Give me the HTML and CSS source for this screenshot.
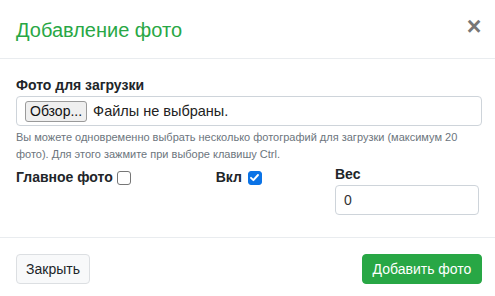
FILE: index.html
```html
<!DOCTYPE html>
<html lang="ru">

<head>
    <meta charset="UTF-8">
    <meta name="viewport" content="width=device-width, initial-scale=1.0">
    <title>Добавление фото</title>
    <link rel="stylesheet" href="styles.css">
</head>

<body>
    <div class="modal">
        <div class="modal-header">
            <h5 class="modal-title">Добавление фото</h5>
            <button class="close-btn">&times;</button>
        </div>
        <div class="modal-body">
            <label class="field-label">Фото для загрузки</label>
            <div class="file-box">
                <span class="file-btn">Обзор...</span>
                <span class="file-text">Файлы не выбраны.</span>
            </div>
            <div class="help-text">Вы можете одновременно выбрать несколько фотографий для загрузки (максимум 20 фото). Для этого зажмите при выборе клавишу Ctrl.</div>
            <div class="form-row">
                <div class="col col-main">
                    <label class="check-label">Главное фото <span class="check"></span></label>
                </div>
                <div class="col col-on">
                    <label class="check-label">Вкл <span class="check checked">
                        <svg width="11" height="11" viewBox="0 0 11 11"><path d="M2 5.8 L4.4 8.2 L9 3" fill="none" stroke="#fff" stroke-width="1.9" stroke-linecap="round" stroke-linejoin="round"/></svg>
                    </span></label>
                </div>
                <div class="col col-weight">
                    <label class="field-label">Вес</label>
                    <div class="text-input">0</div>
                </div>
            </div>
        </div>
        <div class="modal-footer">
            <button class="btn btn-light">Закрыть</button>
            <button class="btn btn-green">Добавить фото</button>
        </div>
    </div>
</body>

</html>
```

FILE: styles.css
```css
* {
    padding: 0;
    margin: 0;
    box-sizing: border-box;
}

body {
    background: #fff;
    font-family: "Liberation Sans", Arial, sans-serif;
    color: #212529;
}

.modal {
    width: 495px;
    height: 296px;
}

.modal-header {
    display: flex;
    justify-content: space-between;
    align-items: center;
    padding: 13px 11px 13px 16px;
    height: 59px;
    border-bottom: 1px solid #e9ecef;
}

.modal-title {
    font-size: 20px;
    font-weight: normal;
    color: #28a745;
    line-height: 24px;
    margin-top: 2px;
}

.close-btn {
    border: none;
    background: none;
    font-family: "Liberation Sans", Arial, sans-serif;
    font-size: 25px;
    font-weight: bold;
    color: #777;
    line-height: 24px;
    width: 20px;
    margin-top: -7px;
}

.modal-body {
    padding: 16px 16px 0 16px;
    height: 179px;
    border-bottom: 1px solid #e9ecef;
}

.field-label {
    display: block;
    font-size: 14px;
    font-weight: bold;
    line-height: 21px;
}

.file-box {
    display: flex;
    align-items: center;
    width: 466px;
    height: 30px;
    border: 1px solid #ced4da;
    border-radius: 4px;
    padding-left: 8px;
    font-size: 14px;
}

.file-btn {
    display: inline-block;
    height: 21px;
    line-height: 19px;
    padding: 0 4px;
    border: 1px solid #9a9a9a;
    border-radius: 3px;
    background: #efefef;
    color: #111;
    font-size: 14px;
}

.file-text {
    margin-left: 6px;
    color: #222;
    font-size: 14.5px;
}

.help-text {
    margin-top: 3px;
    font-size: 11px;
    line-height: 17px;
    color: #6c757d;
    padding-right: 10px;
}

.form-row {
    display: flex;
    margin-top: 1px;
}

.col-main {
    width: 201px;
}

.col-on {
    width: 120px;
}

.col-weight {
    width: 145px;
}

.check-label {
    display: flex;
    align-items: center;
    gap: 4px;
    font-size: 14px;
    font-weight: bold;
    line-height: 21px;
    margin-top: 3px;
}

.col-on .check-label {
    gap: 6px;
}

.check {
    display: inline-flex;
    align-items: center;
    justify-content: center;
    width: 14px;
    height: 14px;
    border: 1px solid #767676;
    border-radius: 3px;
    background: #fff;
}

.check.checked {
    border-color: #0b73e6;
    background: #0b73e6;
}

.text-input {
    margin-top: 0;
    height: 30px;
    border: 1px solid #ced4da;
    border-radius: 4px;
    padding-left: 8px;
    font-size: 14px;
    line-height: 28px;
    color: #333;
}

.modal-footer {
    display: flex;
    justify-content: space-between;
    padding: 16px 13px 0 16px;
}

.btn {
    height: 30px;
    padding: 0 8px;
    border-radius: 4px;
    font-family: "Liberation Sans", Arial, sans-serif;
    font-size: 14px;
}

.btn-light {
    width: 74px;
    background: #f8f9fa;
    border: 1px solid #dcdfe2;
    color: #212529;
}

.btn-green {
    width: 120px;
    background: #28a745;
    border: 1px solid #28a745;
    color: #fff;
}
```
